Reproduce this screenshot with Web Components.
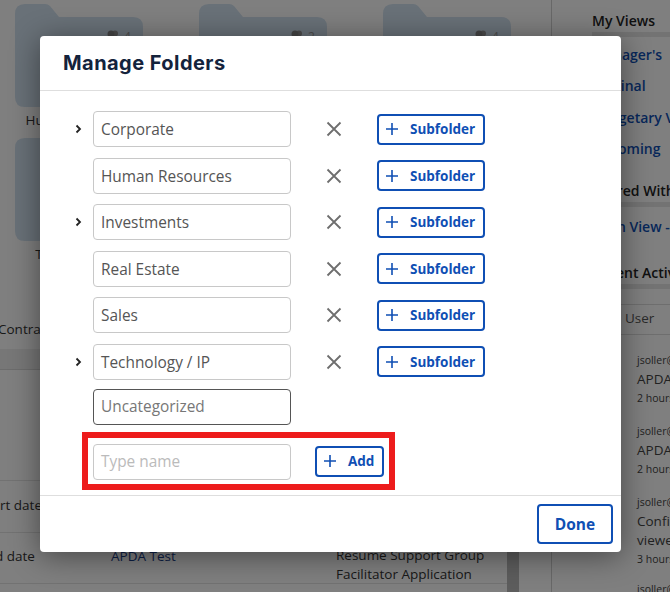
<!DOCTYPE html>
<html>
<head>
<meta charset="utf-8">
<style>
    html, body { margin: 0; height: 100%; overflow: hidden; }
    body { font-family: "Open Sans", sans-serif; }
</style>
</head>
<body>
<app-page>
    <folder-grid slot="main"></folder-grid>
    <side-panel slot="side"></side-panel>
    <manage-folders slot="modal"></manage-folders>
</app-page>

<script>
// Page behind the dialog, with the dark overlay on top
class AppPage extends HTMLElement {
    constructor() {
        super();
        this.attachShadow({ mode: 'open' });
        this.shadowRoot.innerHTML = `
            <style>
                :host { display: block; position: relative; width: 670px; height: 592px; overflow: hidden; background: #fff; }
                .layout { display: grid; grid-template-columns: 552px 118px; height: 592px; }
                .main { border-right: 1px solid #d0d0d0; overflow: hidden; }
                .overlay { position: absolute; inset: 0; background: rgba(0, 0, 0, 0.5); }
                .dialog { position: absolute; left: 40px; top: 36px; }
            </style>
            <div class="layout">
                <div class="main"><slot name="main"></slot></div>
                <div><slot name="side"></slot></div>
            </div>
            <div class="overlay"></div>
            <div class="dialog"><slot name="modal"></slot></div>
        `;
    }
}

class BgFolder extends HTMLElement {
    constructor() {
        super();
        this.attachShadow({ mode: 'open' });
        this.shadowRoot.innerHTML = `
            <style>
                :host { display: block; width: 128px; color: #333; font-size: 13.5px; text-align: center; }
                svg { display: block; }
                .label { margin-top: 3px; padding-left: 8px; line-height: 20px; white-space: nowrap; }
            </style>
            <svg width="128" height="103" viewBox="0 0 128 103">
                <path d="M10 0H30Q33 0 35 2L44 13H118Q128 13 128 23V93Q128 103 118 103H10Q0 103 0 93V10Q0 0 10 0Z" fill="#d2e2f0"/>
                <circle cx="100" cy="29.5" r="3" fill="#999"/>
                <circle cx="96" cy="30" r="3.5" fill="#888"/>
                <path d="M91 40q5-7 10 0z" fill="#888"/>
                <text x="112.5" y="37" font-family="Open Sans" font-size="12" fill="#999" text-anchor="middle">${this.getAttribute('count') || ''}</text>
            </svg>
            <div class="label"><slot></slot></div>
        `;
    }
}

class FolderGrid extends HTMLElement {
    constructor() {
        super();
        this.attachShadow({ mode: 'open' });
        this.shadowRoot.innerHTML = `
            <style>
                :host { display: block; height: 592px; color: #333; font-size: 13.5px; }
                .folders { display: grid; grid-template-columns: repeat(3, 128px); column-gap: 56px; row-gap: 8px; padding: 4px 0 0 15px; }
                .contract { margin: 55px 0 0 -2px; height: 20px; line-height: 20px; white-space: nowrap; }
                .tab { margin-top: 10px; height: 21px; box-sizing: border-box; background: #eee; border-bottom: 1px solid #d8d8d8; }
                .body { display: grid; grid-template-columns: 507px 12px; }
                .rows { padding-top: 110px; }
                .row { display: grid; grid-template-columns: 111px 225px 1fr; border-top: 1px solid #e4e4e4; height: 51.5px; box-sizing: border-box; padding-top: 13.5px; line-height: 20px; white-space: nowrap; }
                .link { color: #1b3f8b; }
                .bar { background: #bbb; }
                .long { line-height: 18.5px; white-space: normal; }
                .cut { margin-left: -5px; }
            </style>
            <div class="folders">
                <bg-folder count="4">Human Resources</bg-folder>
                <bg-folder count="2"></bg-folder>
                <bg-folder count="4"></bg-folder>
                <bg-folder>Technology / IP</bg-folder>
                <bg-folder></bg-folder>
                <bg-folder></bg-folder>
            </div>
            <div class="contract">Contract</div>
            <div class="tab"></div>
            <div class="body">
                <div class="rows">
                    <div class="row"><span>rt date</span><span></span><span></span></div>
                    <div class="row"><span class="cut">d date</span><span class="link">APDA Test</span><span class="long">Resume Support Group Facilitator Application</span></div>
                    <div class="row"></div>
                </div>
                <div class="bar"></div>
            </div>
        `;
    }
}

class SidePanel extends HTMLElement {
    constructor() {
        super();
        this.attachShadow({ mode: 'open' });
        this.shadowRoot.innerHTML = `
            <style>
                :host { display: block; height: 592px; padding: 11px 0 0 40px; color: #222; font-size: 14px; white-space: nowrap; overflow: hidden; box-sizing: border-box; }
                h3 { margin: 0; padding-bottom: 1px; border-bottom: 5px solid #e6e6e6; font-size: 14px; font-weight: 600; line-height: 20px; }
                .link { color: #0f4fb4; font-weight: 600; line-height: 31.5px; }
                .user { margin: 15px 0 0 -40px; padding-left: 73px; height: 31px; box-sizing: border-box; border-top: 1px solid #ddd; border-bottom: 1px solid #ddd; color: #555; font-size: 13.5px; line-height: 27px; }
                .act { margin-left: 45px; height: 71px; color: #444; font-size: 13.5px; }
                .act small { display: block; font-size: 10.5px; line-height: 18px; }
                .act small:first-child { line-height: 20px; }
                .act div { line-height: 19px; }
            </style>
            <h3>My Views</h3>
            <div class="link" style="margin-top:1.5px">Manager's</div>
            <div class="link">Original</div>
            <div class="link">Budgetary Views</div>
            <div class="link">Upcoming</div>
            <h3 style="margin-top:16.5px">Shared With Me</h3>
            <div class="link" style="margin-top:3.5px">Main View - All</div>
            <h3 style="margin-top:20.5px">Recent Activity</h3>
            <div class="user">User</div>
            <div class="act" style="margin-top:15px"><small>jsoller@</small><div>APDA</div><small>2 hours</small></div>
            <div class="act"><small>jsoller@</small><div>APDA</div><small>2 hours</small></div>
            <div class="act" style="height:87px"><small>jsoller@</small><div>Confic</div><div>viewed</div><small>3 hours</small></div>
            <div class="act"><small>jsoller@</small></div>
        `;
    }
}

class SubButton extends HTMLElement {
    constructor() {
        super();
        this.attachShadow({ mode: 'open' });
        this.shadowRoot.innerHTML = `
            <style>
                :host { display: inline-flex; align-items: center; height: 31px; box-sizing: border-box; border: 2px solid #0f4fb4; border-radius: 4px; padding: 0 7.5px 0 7px; color: #0f4fb4; font-size: 13.5px; font-weight: 700; background: #fff; white-space: nowrap; }
                svg { margin-right: 12px; }
            </style>
            <svg width="12" height="12" viewBox="0 0 12 12"><path d="M6 0V12M0 6H12" stroke="#0f4fb4" stroke-width="1.6" fill="none"/></svg>
            <slot></slot>
        `;
    }
}

class FolderRow extends HTMLElement {
    constructor() {
        super();
        this.attachShadow({ mode: 'open' });
        const expand = this.hasAttribute('expandable');
        this.shadowRoot.innerHTML = `
            <style>
                :host { display: flex; align-items: center; height: 36px; }
                .chev { width: 53px; display: flex; justify-content: flex-end; padding-right: 10px; box-sizing: border-box; }
                .name { width: 198px; height: 36px; box-sizing: border-box; border: 1px solid #c8c8c8; border-radius: 4px; padding-left: 7px; line-height: 36px; font-size: 15.4px; color: #555; white-space: nowrap; }
                .del { display: flex; margin-left: 33px; }
                sub-button { margin-left: 33px; }
            </style>
            <div class="chev">${expand ? '<svg width="9" height="10" viewBox="0 0 9 10"><path d="M2.5 1.5L6 5L2.5 8.5" fill="none" stroke="#222" stroke-width="1.8"/></svg>' : ''}</div>
            <div class="name"><slot></slot></div>
            <div class="del"><svg width="20" height="20" viewBox="0 0 20 20"><path d="M3.5 3.5L16.5 16.5M16.5 3.5L3.5 16.5" fill="none" stroke="#6e6e6e" stroke-width="1.8"/></svg></div>
            <sub-button>Subfolder</sub-button>
        `;
    }
}

class ManageFolders extends HTMLElement {
    constructor() {
        super();
        this.attachShadow({ mode: 'open' });
        this.shadowRoot.innerHTML = `
            <style>
                :host { display: block; width: 581px; height: 516px; background: #fff; border-radius: 4px; box-shadow: 0 4px 30px rgba(0, 0, 0, 0.45); }
                header { height: 55px; box-sizing: border-box; border-bottom: 1px solid #dedede; padding: 13px 0 0 23px; }
                h2 { margin: 0; font: 700 20px/28px Inter, sans-serif; letter-spacing: 0.45px; color: #14233c; }
                .list { display: flex; flex-direction: column; gap: 10.5px; padding-top: 20px; height: 341px; box-sizing: border-box; }
                .plain { display: flex; padding-left: 53px; margin-top: -1px; }
                .plain div { width: 198px; height: 36px; box-sizing: border-box; border: 1px solid #555; border-radius: 4px; padding-left: 7px; line-height: 34px; font-size: 15.4px; color: #777; }
                .add { display: flex; align-items: center; margin-left: 42px; width: 313px; height: 58px; box-sizing: border-box; border: 6px solid #ed1c1c; padding-left: 5px; }
                .add div { width: 198px; height: 36px; margin-top: 1px; box-sizing: border-box; border: 1px solid #c8c8c8; border-radius: 4px; padding-left: 7px; line-height: 34px; font-size: 15.4px; color: #bbb; }
                .add sub-button { margin-left: 24px; }
                footer { margin-top: 5px; border-top: 1px solid #dedede; display: flex; justify-content: flex-end; padding: 8px 8px 0 0; }
                .done { width: 76px; height: 40px; box-sizing: border-box; border: 2px solid #0f4fb4; border-radius: 4px; display: flex; align-items: center; justify-content: center; color: #0f4fb4; font-size: 15.5px; font-weight: 700; }
            </style>
            <header><h2>Manage Folders</h2></header>
            <div class="list">
                <folder-row expandable>Corporate</folder-row>
                <folder-row>Human Resources</folder-row>
                <folder-row expandable>Investments</folder-row>
                <folder-row>Real Estate</folder-row>
                <folder-row>Sales</folder-row>
                <folder-row expandable>Technology / IP</folder-row>
                <div class="plain"><div>Uncategorized</div></div>
            </div>
            <div class="add"><div>Type name</div><sub-button>Add</sub-button></div>
            <footer><div class="done">Done</div></footer>
        `;
    }
}

customElements.define('sub-button', SubButton);
customElements.define('folder-row', FolderRow);
customElements.define('bg-folder', BgFolder);
customElements.define('folder-grid', FolderGrid);
customElements.define('side-panel', SidePanel);
customElements.define('manage-folders', ManageFolders);
customElements.define('app-page', AppPage);
</script>
</body>
</html>
